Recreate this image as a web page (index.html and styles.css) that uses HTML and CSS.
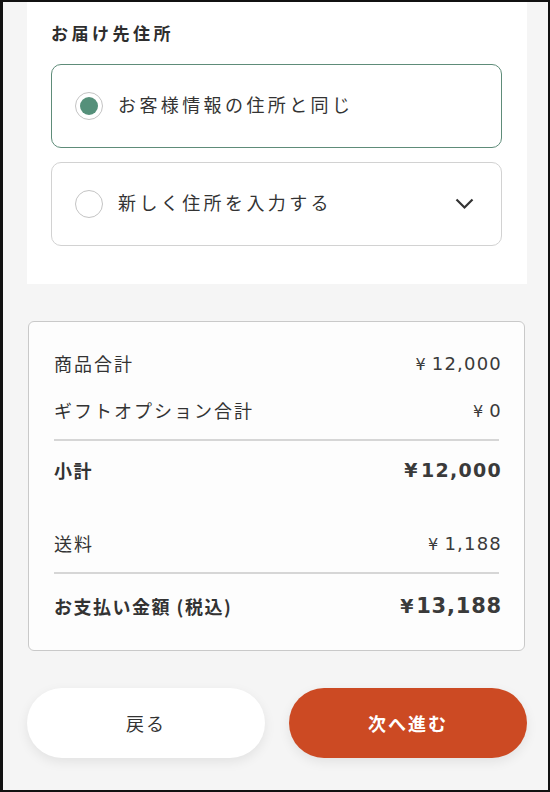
FILE: index.html
```html
<!DOCTYPE html>
<html lang="ja">

<head>
    <meta charset="UTF-8">
    <meta name="viewport" content="width=device-width, initial-scale=1.0">
    <title>お届け先住所</title>
    <link rel="stylesheet" href="styles.css">
</head>

<body>
    <div class="frame">
        <section class="address">
            <h2 class="address-title">お届け先住所</h2>
            <div class="options">
                <label class="option is-selected">
                    <span class="radio"><span class="radio-dot"></span></span>
                    <span class="option-text">お客様情報の住所と同じ</span>
                </label>
                <label class="option">
                    <span class="radio"></span>
                    <span class="option-text">新しく住所を入力する</span>
                    <svg class="chevron" width="19" height="12" viewBox="0 0 19 12">
                        <polyline points="1.5,1.5 9.5,9.5 17.5,1.5" fill="none" stroke="#333" stroke-width="2.2" />
                    </svg>
                </label>
            </div>
        </section>

        <section class="summary">
            <div class="row">
                <span class="label">商品合計</span>
                <span class="price"><span class="yen">¥</span>12,000</span>
            </div>
            <div class="row row-next">
                <span class="label">ギフトオプション合計</span>
                <span class="price"><span class="yen">¥</span>0</span>
            </div>
            <div class="divider"></div>
            <div class="row row-bold">
                <span class="label">小計</span>
                <span class="price"><span class="yen">¥</span>12,000</span>
            </div>
            <div class="row row-spaced">
                <span class="label">送料</span>
                <span class="price"><span class="yen">¥</span>1,188</span>
            </div>
            <div class="divider"></div>
            <div class="row row-total">
                <span class="label">お支払い金額 (税込)</span>
                <span class="price"><span class="yen">¥</span>13,188</span>
            </div>
        </section>

        <div class="actions">
            <button class="btn btn-back">戻る</button>
            <button class="btn btn-next">次へ進む</button>
        </div>
    </div>
</body>

</html>
```

FILE: styles.css
```css
body {
    margin: 0;
    padding: 0;
    font-family: "Noto Sans CJK JP", sans-serif;
    color: #333;
}

.frame {
    width: 550px;
    height: 792px;
    box-sizing: border-box;
    border: 2px solid #111;
    border-left-width: 3px;
    background-color: #f5f5f5;
    padding: 0 21px 0 24px;
}

/* address block */
.address {
    background: #ffffff;
    padding: 19px 25px 38px 24px;
}

.address-title {
    margin: 0;
    font-size: 17px;
    line-height: 24px;
    font-weight: 700;
    letter-spacing: 3.5px;
    color: #2e2e2e;
}

.options {
    display: flex;
    flex-direction: column;
    gap: 14px;
    margin-top: 19px;
}

.option {
    display: flex;
    align-items: center;
    height: 84px;
    box-sizing: border-box;
    border: 1.5px solid #d2d2d2;
    border-radius: 10px;
    padding: 0 27px 0 23px;
    background: #fff;
}

.option.is-selected {
    border-color: #5e8c79;
}

.radio {
    width: 28px;
    height: 28px;
    box-sizing: border-box;
    border: 1.5px solid #c4c4c4;
    border-radius: 50%;
    display: flex;
    align-items: center;
    justify-content: center;
    flex-shrink: 0;
}

.radio-dot {
    width: 18px;
    height: 18px;
    border-radius: 50%;
    background-color: #55907a;
}

.option-text {
    margin-left: 15px;
    padding-bottom: 5px;
    font-size: 18px;
    letter-spacing: 3.4px;
    color: #333;
    flex: 1;
}

.chevron {
    display: block;
}

/* order summary */
.summary {
    margin: 37px 2px 0 1px;
    background: #fdfdfd;
    border: 1px solid #c9c9c9;
    border-radius: 6px;
    padding: 29px 25px 30px;
    display: flex;
    flex-direction: column;
}

.row {
    display: flex;
    justify-content: space-between;
    align-items: center;
    height: 24px;
}

.label {
    font-size: 18px;
    letter-spacing: 2px;
    color: #333;
}

.price {
    font-family: "DejaVu Sans", sans-serif;
    font-size: 18px;
    letter-spacing: 1.2px;
    margin-right: -3px;
    color: #3a3a3a;
}

.yen {
    margin-right: 5px;
    font-size: 16px;
}

.row-next {
    margin-top: 23px;
}

.divider {
    height: 2px;
    background-color: #d6d6d6;
    margin: 17px 0 17px;
}

.row-bold .label,
.row-total .label {
    font-weight: 700;
    letter-spacing: 1.5px;
}

.row-bold .price {
    font-weight: 700;
    font-size: 19px;
    letter-spacing: 1.3px;
}

.row-bold .yen,
.row-total .yen {
    margin-right: 2px;
    font-size: 19px;
}

.row-spaced {
    margin-top: 49px;
}

.row-total {
    height: 28px;
    margin-top: 1px;
}

.row-total .price {
    font-weight: 700;
    font-size: 21px;
    letter-spacing: 0.8px;
}

/* buttons */
.actions {
    display: flex;
    gap: 24px;
    margin-top: 37px;
}

.btn {
    flex: 1;
    height: 70px;
    border: none;
    border-radius: 35px;
    font-family: "Noto Sans CJK JP", sans-serif;
    font-size: 18px;
    letter-spacing: 2px;
    cursor: pointer;
    box-shadow: 0 4px 12px rgba(0, 0, 0, 0.08);
}

.btn-back {
    background-color: #ffffff;
    color: #333;
}

.btn-next {
    background-color: #cc4a23;
    color: #fff;
    font-weight: 700;
}
```
